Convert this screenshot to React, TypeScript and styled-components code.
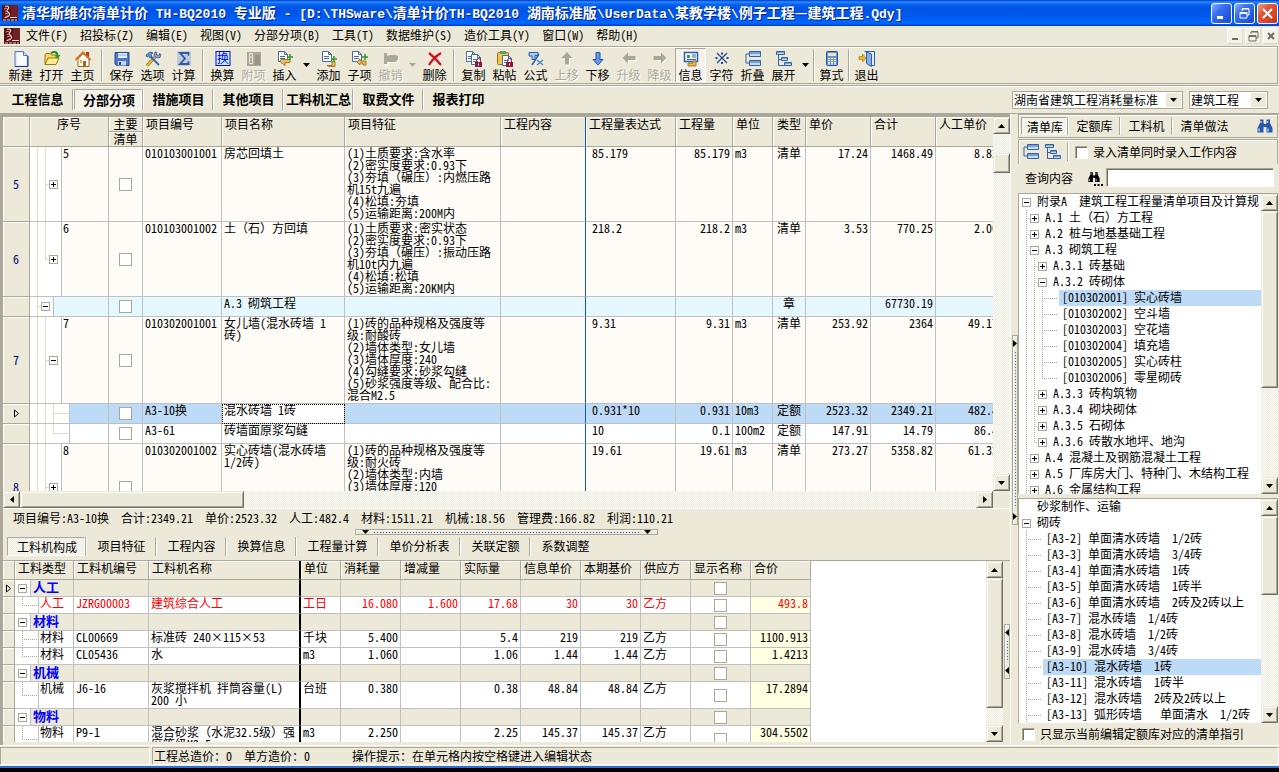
import React from "react";
import styled, { createGlobalStyle, css } from "styled-components";

const C = {
  face: "#ece9d8",
  edge: "#aca899",
  dark: "#716f64",
  line: "#c0c0c0",
  cream: "#fffcf7",
  section: "#e6f8ff",
  select: "#bddbf7",
  navy: "#000080",
  blue: "#0000ff",
  red: "#ff0000",
  yellow: "#ffffe1",
  frozen: "#1058c8",
};

const checker = `repeating-conic-gradient(${C.face} 0 25%, #fff 0 50%) 0 0 / 2px 2px`;

const Global = createGlobalStyle`
  * { box-sizing: border-box; }
  body { margin: 0; background: ${C.face}; }
  body, button, input, select, table {
    font-family: "Noto Sans CJK SC", "Liberation Sans", sans-serif;
    font-size: 12px;
    line-height: 12px;
    font-feature-settings: "hwid";
    color: #000;
  }
  button, input, select { margin: 0; padding: 0; border: 0; background: none; border-radius: 0; }
  svg { display: block; overflow: visible; }
`;

/* ---------- shared parts ---------- */

const Shell = styled.div`
  display: flex;
  flex-direction: column;
  height: 100vh;
  min-height: 600px;
  overflow: hidden;
  background: ${C.face};
`;

/* Full-width brackets keep their whole em; everything else in Latin is half an em. */
const FullWidth = styled.span`
  font-feature-settings: "hwid" 0;
`;
function wide(text?: string): React.ReactNode {
  return text?.split(/([（）])/).map((s, i) => (i % 2 ? <FullWidth key={i}>{s}</FullWidth> : s));
}

const Check = styled.input.attrs({ type: "checkbox" })<{ $sunken?: boolean }>`
  appearance: none;
  display: block;
  flex: none;
  width: 13px;
  height: 13px;
  border: 1px solid ${C.edge};
  background: #fff;
  ${(p) => p.$sunken && css`border-color: ${C.edge} #fff #fff ${C.edge}; box-shadow: inset 1px 1px ${C.dark};`}
`;

type Dir = "up" | "down" | "left" | "right";
const arrowPath: Record<Dir, string> = {
  up: "M0 4h7L3.5 0z",
  down: "M0 0h7L3.5 4z",
  left: "M4 0v7L0 3.5z",
  right: "M0 0v7l4-3.5z",
};
function Arrow({ dir, color = "#000" }: { dir: Dir; color?: string }) {
  const flat = dir === "up" || dir === "down";
  return (
    <svg width={flat ? 7 : 4} height={flat ? 4 : 7} aria-hidden="true">
      <path d={arrowPath[dir]} fill={color} />
    </svg>
  );
}

const Bar = styled.div<{ $h?: boolean }>`
  display: flex;
  flex: none;
  flex-direction: ${(p) => (p.$h ? "row" : "column")};
  ${(p) => (p.$h ? "height: 17px;" : "width: 17px;")}
  background: ${checker};
`;
const raised = css`
  background: ${C.face};
  border: 1px solid;
  border-color: ${C.face} ${C.dark} ${C.dark} ${C.face};
  box-shadow: inset 1px 1px #fff, inset -1px -1px ${C.edge};
`;
const BarButton = styled.button`
  ${raised}
  display: grid;
  place-items: center;
  flex: none;
  width: 17px;
  height: 17px;
`;
const Thumb = styled.div<{ $size: number; $h?: boolean }>`
  ${raised}
  flex: 0 1 ${(p) => p.$size}px;
  ${(p) => (p.$h ? "height: 17px;" : "width: 17px;")}
`;
const Space = styled.div<{ $size?: number }>`
  flex: ${(p) => (p.$size === undefined ? "1 1 0" : `0 0 ${p.$size}px`)};
`;
function ScrollBar({ thumb, before = 0, h }: { thumb: number; before?: number; h?: boolean }) {
  return (
    <Bar $h={h}>
      <BarButton aria-label={h ? "向左滚动" : "向上滚动"}><Arrow dir={h ? "left" : "up"} /></BarButton>
      <Space $size={before} />
      <Thumb $size={thumb} $h={h} />
      <Space />
      <BarButton aria-label={h ? "向右滚动" : "向下滚动"}><Arrow dir={h ? "right" : "down"} /></BarButton>
    </Bar>
  );
}

const Grip = styled.div<{ $h?: boolean; $len: number }>`
  display: flex;
  flex: none;
  align-items: center;
  justify-content: space-between;
  overflow: hidden;
  border: 1px solid ${C.edge};
  box-shadow: inset 1px 1px #fff;
  flex-direction: ${(p) => (p.$h ? "row" : "column")};
  ${(p) => (p.$h ? `width: ${p.$len}px; height: 6px; padding: 0 6px;` : `width: 6px; height: ${p.$len}px; padding: 4px 0;`)}
`;
const Dots = styled.div<{ $h?: boolean }>`
  flex: 1;
  margin: ${(p) => (p.$h ? "0 5px" : "5px 0")};
  ${(p) =>
    p.$h
      ? "height: 1px; background: repeating-linear-gradient(90deg, #316ac5 0 1px, transparent 1px 3px);"
      : "width: 1px; background: repeating-linear-gradient(#316ac5 0 1px, transparent 1px 3px);"}
`;
function Splitter({ dir, len }: { dir: Dir; len: number }) {
  const h = dir === "down";
  return (
    <Grip $h={h} $len={len}>
      <Arrow dir={dir} />
      <Dots $h={h} />
      <Arrow dir={dir} />
    </Grip>
  );
}

const Tabs = styled.nav`
  display: flex;
  align-items: stretch;
  flex: none;
`;
const Tab = styled.button<{ $on?: boolean; $bold?: boolean; $w: number }>`
  flex: none;
  width: ${(p) => p.$w}px;
  white-space: nowrap;
  padding: ${(p) => (p.$on ? "1px 2px 0 4px" : "0 0 1px 1px")};
  ${(p) => p.$bold && "font-size: 13px; font-weight: 700;"}
  border: 1px solid transparent;
  ${(p) =>
    p.$on
      ? css`
          border-color: ${C.edge} #fff #fff ${C.edge};
          background: ${checker};
        `
      : ""}
`;
const TabRule = styled.i`
  flex: none;
  width: 2px;
  border-left: 1px solid ${C.edge};
  border-right: 1px solid #fff;
`;

/* ---------- title bar ---------- */

const Title = styled.header`
  display: flex;
  align-items: center;
  flex: none;
  height: 26px;
  padding: 0 1px 0 2px;
  background: linear-gradient(#0038c8 0, #2a8cff 2px, #0a66f0 4px, #0054e3 8px, #0058ee 16px, #0068ff 22px, #0060f8 24px, #0034b8 26px);
`;
const TitleText = styled.h1`
  flex: 1;
  min-width: 0;
  margin: 0 0 0 4px;
  white-space: pre;
  font-size: 14px;
  line-height: 18px;
  font-weight: 700;
  color: #fff;
  text-shadow: 1px 1px #00248c;
`;
const Mono = styled.span`
  font-family: "Liberation Mono", monospace;
  font-size: 13px;
`;
const WinButton = styled.button<{ $close?: boolean }>`
  display: grid;
  place-items: center;
  width: 21px;
  height: 21px;
  margin-left: 2px;
  border: 1px solid #fff;
  border-radius: 3px;
  background: ${(p) =>
    p.$close
      ? "linear-gradient(135deg, #f0a088, #e0583a 35%, #d04020 80%, #b83010)"
      : "linear-gradient(135deg, #8cb0f8, #3a70f0 35%, #2058e0 75%, #1a48c8)"};
`;

function Logo() {
  return (
    <svg width="16" height="16" viewBox="0 0 16 16" aria-hidden="true">
      <rect width="16" height="16" fill="#5a1418" />
      <path d="M9 0h7v12H9z" fill="#6e2024" />
      <path d="M3 1.500c3.500-1.500 4.500 1 3 2.500s-1 2.500.5 3.500 1.500 3-.5 4-3 .500-3 1.500" fill="none" stroke="#f0d0c8" strokeWidth="1.200" />
      <path d="M2 4l3-1M3 6.500l3-1M3 9l3-1M5 11l3-1" stroke="#c89088" />
      <path d="M8 12.500h7M1 15h3m1 0h3m1 0h3m1 0h2" stroke="#f0dcd8" />
    </svg>
  );
}
const restoreShape = (c: string) => (
  <svg width="11" height="11" viewBox="0 0 11 11" aria-hidden="true">
    <path d="M3 3V1h7v6H8M3 .500h7M1 4.500h7V10H1zM1 5.500h7" fill="none" stroke={c} />
  </svg>
);

const TITLE = "清华斯维尔清单计价 TH-BQ2010 专业版 - [D:\\THSware\\清单计价TH-BQ2010 湖南标准版\\UserData\\某教学楼\\例子工程—建筑工程.Qdy]";

function TitleBar() {
  return (
    <Title>
      <Logo />
      <TitleText>
        {TITLE.split(/([\x20-\x7e]+)/).map((s, i) => (i % 2 ? <Mono key={i}>{s}</Mono> : s))}
      </TitleText>
      <WinButton aria-label="最小化">
        <svg width="11" height="11"><path d="M1 8h6v3H1z" fill="#fff" /></svg>
      </WinButton>
      <WinButton aria-label="还原">{restoreShape("#fff")}</WinButton>
      <WinButton aria-label="关闭" $close>
        <svg width="13" height="13"><path d="M2 2l9 9M11 2l-9 9" stroke="#fff" strokeWidth="2" /></svg>
      </WinButton>
    </Title>
  );
}

/* ---------- menu ---------- */

const Menu = styled.nav`
  display: flex;
  align-items: center;
  flex: none;
  height: 20px;
  padding-left: 4px;
`;
const MenuItem = styled.button`
  flex: none;
  height: 18px;
  padding: 0 6px 2px;
  white-space: nowrap;
`;
const MdiButton = styled.button`
  display: grid;
  place-items: center;
  width: 16px;
  height: 16px;
  margin-left: 2px;
  background: #f4f2e8;
  border: 1px solid;
  border-color: #fff #e0dccc #d8d4c4 #fff;
`;
const MENUS = ["文件(F)", "招投标(Z)", "编辑(E)", "视图(V)", "分部分项(B)", "工具(T)", "数据维护(S)", "造价工具(Y)", "窗口(W)", "帮助(H)"];

function MenuBar() {
  return (
    <Menu>
      <Logo />
      {MENUS.map((m) => <MenuItem key={m}>{m}</MenuItem>)}
      <Space />
      <MdiButton aria-label="最小化子窗口"><svg width="10" height="10"><path d="M2 7h6v2H2z" fill={C.dark} /></svg></MdiButton>
      <MdiButton aria-label="还原子窗口">{restoreShape(C.dark)}</MdiButton>
      <MdiButton aria-label="关闭子窗口"><svg width="10" height="10"><path d="M2 2l6 6M8 2L2 8" stroke={C.dark} strokeWidth="2" /></svg></MdiButton>
    </Menu>
  );
}

/* ---------- toolbar ---------- */

const Strip = styled.div`
  display: flex;
  align-items: stretch;
  flex: none;
  height: 38px;
  margin-right: 1px;
  padding: 1px 0 1px 5px;
  border: 1px solid ${C.edge};
  border-left: 0;
  box-shadow: inset 0 1px #fff;
`;
const Tool = styled.button<{ $off?: boolean; $on?: boolean }>`
  display: flex;
  flex-direction: column;
  align-items: center;
  flex: none;
  width: 31px;
  padding: 2px 0 0;
  white-space: nowrap;
  border: 1px solid transparent;
  gap: 2px;
  ${(p) => p.$off && `color: ${C.edge}; text-shadow: 1px 1px #fff;`}
  ${(p) => p.$on && css`border-color: ${C.edge} #fff #fff ${C.edge}; background: #f4f2ea;`}
`;
const ToolRule = styled.i<{ $w?: number }>`
  flex: none;
  width: 2px;
  margin: 1px ${(p) => ((p.$w ?? 8) - 2) / 2}px;
  border-left: 1px solid ${C.edge};
  border-right: 1px solid #fff;
`;
const ToolMore = styled.button`
  display: grid;
  place-items: center;
  flex: none;
  width: 13px;
`;

const Page = ({ x = 0, y = 0 }: { x?: number; y?: number }) => (
  <g transform={`translate(${x} ${y})`}>
    <path d="M.500.500h6l3 3v7h-9z" fill="#fff" stroke="#4a6aa8" />
    <path d="M6.500.500v3h3M2 5.500h5M2 7.500h5" fill="none" stroke="#4a6aa8" />
  </g>
);
const Plus = ({ x, y }: { x: number; y: number }) => <path d={`M${x - 3} ${y}h6M${x} ${y - 3}v6`} stroke="#2a9a2a" strokeWidth="1.500" />;
const Lock = () => (
  <g>
    <path d="M10.500 11V9.500a2 2 0 014 0V11" fill="none" stroke="#902040" />
    <rect x="9" y="11" width="7" height="5" fill="#901838" />
    <rect x="12" y="12.500" width="1" height="2" fill="#fff" />
  </g>
);

const GLYPHS: Record<string, React.ReactNode> = {
  新建: (<><path d="M2 .500h8.500l4 4v11H2z" fill="#dce9ff" stroke="#5078c0" /><path d="M4 2h6v3h3v9H4z" fill="#f8fbff" /><path d="M10.500.500v4h4" fill="#c8dcff" stroke="#5078c0" /><path d="M2 15.500h13V5" fill="none" stroke="#203880" /></>),
  打开: (<><path d="M1 13.500V4l1-1.500h4L7.500 4H12v3" fill="#f8d860" stroke="#a07810" /><path d="M1 13.500L4 7h11l-3 6.500z" fill="#ffec98" stroke="#a07810" /><path d="M7 2.500C9 0 13 .500 13.500 4" fill="none" stroke="#208820" strokeWidth="2" /><path d="M10.500 4h6l-3 4z" fill="#28a028" /></>),
  主页: (<><path d="M11 1h3v6h-3z" fill="#c03030" /><path d="M3 8v7.500h11V8L8 2.500z" fill="#fff" stroke="#a06820" /><path d="M.500 9L8 1.500 15.500 9" fill="none" stroke="#d07818" strokeWidth="2" /><path d="M8 10h3v5H8z" fill="#b06818" /><path d="M5 9h2v3H5z" fill="#e8b048" /></>),
  保存: (<><path d="M1 1.500h14v13H2.500L1 13z" fill="#4878d0" stroke="#284888" /><path d="M4 2h9v5H4z" fill="#e8f0ff" /><path d="M4 4h9" stroke="#88a8e0" /><path d="M4 10h8v4.500H4z" fill="#c8d4e8" /><path d="M5 11h2v3H5z" fill="#284888" /></>),
  选项: (<><path d="M2 14.500L11 5" stroke="#906810" strokeWidth="3" /><path d="M2 14.500L11 5" stroke="#f8c830" strokeWidth="1.600" /><path d="M10 1l1.500 0v3h3V2.500l1.500 1-1 3-3 .500-3-2.500z" fill="#88a8e0" stroke="#284880" strokeWidth=".7" /><path d="M5 5l9 9" stroke="#3868b8" strokeWidth="2" /><path d="M1 4l4-3 3 1-2 1.500 1 2-2 1.500-1.500-2L2 6z" fill="#6090d8" stroke="#284880" strokeWidth=".7" /></>),
  计算: (<><rect x="1" y="0" width="14" height="15" fill="#c0ccd8" /><path d="M12.500 4.500V2H4l5 5.500L4 13h8.500v-2.500" fill="none" stroke="#3058a8" strokeWidth="1.800" /></>),
  换算: (<><rect x="1" y=".5" width="14" height="14" fill="#c8f0ff" stroke="#0000ff" /><text x="2" y="12" fontSize="12" fill="#0000ff">换</text></>),
  附项: (<><rect x="1" y="1" width="14" height="14" fill={C.edge} /><path d="M3.500 2.500h3v10h-3zM3.500 6h3" fill="none" stroke="#ece9d8" /><path d="M9 4h5v10H9z" fill="#989488" /></>),
  插入: (<><Page x={1} /><path d="M4 8.500h9v3H8v3l-5-4z" fill="#f0c050" stroke="#986018" strokeWidth=".8" /><Plus x={13} y={6} /></>),
  添加: (<><Page x={1} /><path d="M6 14.500h5v-4h3v5H8z" fill="#f0c050" stroke="#986018" strokeWidth=".8" /><Plus x={13} y={8} /></>),
  子项: (<><Page /><path d="M5 11l3-3v2h6v4h-3v-2H8v2z" fill="#f0c050" stroke="#986018" strokeWidth=".8" /><Plus x={13} y={6} /></>),
  撤销: (<><path d="M2 5v9h3v-3h10V6" fill="none" stroke="#fff" /><path d="M1 2v11h3v-2h9l2-3V5l-3-1H7L4 5V2z" fill={C.edge} /></>),
  删除: <path d="M2 2c4 3 8 7 12 12M14 2C9 5 5 9 2 14" fill="none" stroke="#d01020" strokeWidth="2.200" />,
  复制: (<><Page /><Page x={5} y={3} /><Lock /></>),
  粘帖: (<><rect x=".5" y="1.5" width="11" height="12" rx="1" fill="#f0c850" stroke="#907018" /><rect x="3" y="0" width="6" height="3" fill="#60a060" /><Page x={5} y={4} /><Lock /></>),
  公式: (<><path d="M1 1.500h9v3H7v4H4V5H1z" fill="#a8c8f0" stroke="#3060b0" /><path d="M11 3L4 14" stroke="#3060b0" strokeWidth="1.500" /><path d="M9 9l6 5M15 9l-6 5" stroke="#4080c8" strokeWidth="1.200" /></>),
  上移: (<><path d="M9 2l6 6h-4v7H7" fill="#fff" /><path d="M8 1l5.500 6H10v6.500H6V7H2.500z" fill={C.edge} /></>),
  下移: <path d="M8 14l5-5.500h-3V1.500H6v7H3z" fill="#6898e8" stroke="#2850b0" />,
  升级: (<><path d="M3 8l5 5.500V10h7.500V6" fill="#fff" /><path d="M1.500 7L7 1.500V5h7.500v4H7v3.500z" fill={C.edge} /></>),
  降级: (<><path d="M2.500 10H10v3.500L15.500 8" fill="#fff" /><path d="M14.500 7L9 1.500V5H1.500v4H9v3.500z" fill={C.edge} /></>),
  信息: (<><rect x="1.5" y="1.5" width="13" height="9" fill="#fff" stroke="#3060a8" strokeWidth="1.500" /><path d="M4 4h3v3H4z" fill="#40a040" /><path d="M9 4h4M9 6h4M4 8.500h9" stroke="#3060a8" /><path d="M5 15v-3h5v-2h3v5z" fill="#e8b848" stroke="#986018" strokeWidth=".8" /></>),
  字符: (<><path d="M3 2l10 10M13 2L3 12" stroke="#204890" strokeWidth="1.300" /><path d="M7 1.500h2v2H7zM7 11h2v2H7zM1.500 6h2v2h-2zM12.500 6h2v2h-2z" fill="#204890" /></>),
  折叠: (<><path d="M5 3H1v9h4" fill="none" stroke="#3060a8" /><path d="M4.500.500h11v5h-11zM4.500 9.500h11v5h-11z" fill="#c8dcf8" stroke="#3060a8" /><path d="M5 2h10M5 11h10" stroke="#3060a8" /></>),
  展开: (<><path d="M2.500 4v10.500H9M2.500 8.500H6" fill="none" stroke="#3060a8" /><path d="M.500.500h8v3h-8zM5.500 6.500h6v3h-6zM8.500 11.500h7v3h-7z" fill="#c8dcf8" stroke="#3060a8" /><path d="M1 1h8M6 7h5M9 12h6" stroke="#3060a8" /></>),
  算式: (<><rect x="2.500" y=".5" width="11" height="14" rx="1" fill="#6890d8" stroke="#2850a0" /><rect x="4" y="2" width="8" height="3" fill="#f8e8b0" /><path d="M4 7.500h8M4 9.500h8M4 11.500h8M4 13h8" stroke="#fff" strokeDasharray="2 1" /></>),
  退出: (<><path d="M5.500.500h10v14h-4" fill="#e0ecfc" stroke="#3060a8" /><path d="M7.500 1l5 2v12.500l-5-3z" fill="#88b0e8" stroke="#3060a8" /><path d="M7 7L3.500 3v2.500H0v3h3.500V11z" fill="#f0b820" stroke="#a07008" strokeWidth=".6" /></>),
};

const TOOLS = [
  "新建", "打开", "主页", "|", "保存", "选项", "计算", "|", "换算", "附项", "插入", "v", "添加", "子项", "撤销", "x", "删除", "|",
  "复制", "粘帖", "公式", "上移", "下移", "升级", "降级", "信息", "字符", "折叠", "展开", "v", "!", "算式", "!", "退出",
];
const OFF = new Set(["附项", "撤销", "上移", "升级", "降级"]);

function ToolBar() {
  return (
    <Strip>
      {TOOLS.map((t, i) => {
        if (t === "|") return <ToolRule key={i} />;
        if (t === "!") return <ToolRule key={i} $w={4} />;
        if (t === "v" || t === "x") return <ToolMore key={i} aria-label="更多"><Arrow dir="down" color={t === "v" ? "#000" : C.edge} /></ToolMore>;
        return (
          <Tool key={i} $off={OFF.has(t)} $on={t === "信息"}>
            <svg width="16" height="16" viewBox="0 0 16 16" aria-hidden="true">{GLYPHS[t]}</svg>
            {t}
          </Tool>
        );
      })}
    </Strip>
  );
}

/* ---------- page tabs ---------- */

const TabStrip = styled.div`
  display: flex;
  align-items: center;
  flex: none;
  height: 30px;
  padding: 2px 11px 1px 2px;
  box-shadow: inset 0 1px ${C.face}, inset 0 2px ${C.edge}, inset 0 3px #fff, inset 0 -1px ${C.edge};
`;
const MainTabs = styled(Tabs)`
  height: 21px;
`;
const Combo = styled.label<{ $w: number }>`
  display: flex;
  align-items: center;
  flex: none;
  width: ${(p) => p.$w}px;
  height: 18px;
  margin-left: 6px;
  border: 1px solid ${C.edge};
  background: #fff;
  select { appearance: none; flex: 1; min-width: 0; height: 16px; padding-left: 1px; }
`;
const ComboButton = styled.span`
  display: grid;
  place-items: center;
  width: 15px;
  height: 14px;
  margin-right: 1px;
  background: ${C.face};
`;

function PageTabs() {
  const names = ["工程信息", "分部分项", "措施项目", "其他项目", "工料机汇总", "取费文件", "报表打印"];
  return (
    <TabStrip>
      <MainTabs>
        {names.map((n, i) => (
          <React.Fragment key={n}>
            {i > 0 && <TabRule />}
            <Tab $bold $on={i === 1} $w={i === 0 ? 70 : 68}>{n}</Tab>
          </React.Fragment>
        ))}
      </MainTabs>
      <Space />
      <Combo $w={171}><select aria-label="定额标准"><option>湖南省建筑工程消耗量标准</option></select><ComboButton><Arrow dir="down" /></ComboButton></Combo>
      <Combo $w={79}><select aria-label="专业"><option>建筑工程</option></select><ComboButton><Arrow dir="down" /></ComboButton></Combo>
    </TabStrip>
  );
}

/* ---------- tree connectors ---------- */

type Guide = "none" | "line" | "tee" | "end";
/* Each column draws its own piece of the connector: vertical run and horizontal stub. */
const GuideCol = styled.i<{ $kind: Guide; $w: number; $dotted?: boolean }>`
  flex: none;
  align-self: stretch;
  width: ${(p) => p.$w}px;
  ${(p) => {
    if (p.$kind === "none") return "";
    const c = p.$dotted ? C.edge : "#e0dcc8";
    const v = p.$dotted ? `repeating-linear-gradient(${c} 0 1px, transparent 1px 2px)` : `linear-gradient(${c}, ${c})`;
    const hz = p.$dotted ? `repeating-linear-gradient(90deg, ${c} 0 1px, transparent 1px 2px)` : `linear-gradient(${c}, ${c})`;
    const vert = `${v} 4px 0 / 1px ${p.$kind === "end" ? "50%" : "100%"} no-repeat`;
    const horz = `${hz} 4px 50% / 100% 1px no-repeat`;
    return `background: ${p.$kind === "line" ? vert : `${vert}, ${horz}`};`;
  }}
`;
const Box = styled.button`
  display: grid;
  place-items: center;
  flex: none;
  width: 9px;
  height: 9px;
  border: 1px solid ${C.edge};
  background: #fff;
`;
function Expander({ open }: { open: boolean }) {
  return (
    <Box aria-label={open ? "折叠" : "展开"} aria-expanded={open}>
      <svg width="5" height="5" shapeRendering="crispEdges"><path d={open ? "M0 2h5v1H0z" : "M0 2h5v1H0zM2 0h1v5H2z"} /></svg>
    </Box>
  );
}

/* ---------- data grids ---------- */

const Viewport = styled.div`
  flex: 1;
  min-width: 0;
  min-height: 0;
  overflow: hidden;
`;
const Table = styled.table<{ $w: number }>`
  width: ${(p) => p.$w}px;
  table-layout: fixed;
  border-spacing: 0;
  border-collapse: separate;
`;
const Th = styled.th<{ $h: number; $split?: string; $center?: boolean; $flush?: boolean }>`
  height: ${(p) => p.$h}px;
  padding: ${(p) => (p.$flush ? "0" : "0 0 0 3px")};
  vertical-align: top;
  text-align: ${(p) => (p.$center ? "center" : "left")};
  font-weight: 400;
  white-space: nowrap;
  background: ${C.face};
  border-right: 1px solid ${C.edge};
  border-bottom: 1px solid ${C.edge};
  box-shadow: inset 1px 1px #fff;
  line-height: 14px;
  ${(p) => p.$split && `border-right: ${p.$split};`}
`;
const Half = styled.div`
  height: 14px;
  & + & { height: 15px; border-top: 1px solid ${C.edge}; box-shadow: inset 0 1px #fff; }
`;
const Td = styled.td<{ $align?: string; $bg?: string; $split?: string; $pad?: string; $focus?: boolean; $mid?: boolean }>`
  padding: ${(p) => p.$pad ?? "0 2px"};
  vertical-align: ${(p) => (p.$mid ? "middle" : "top")};
  text-align: ${(p) => p.$align ?? "left"};
  white-space: pre;
  border-right: 1px solid ${C.line};
  border-bottom: 1px solid ${C.line};
  ${(p) => p.$bg && `background: ${p.$bg};`}
  ${(p) => p.$split && `border-right: ${p.$split};`}
  ${(p) => p.$focus && "outline: 1px dotted #000; outline-offset: -1px;"}
`;
const Tr = styled.tr<{ $h: number; $bg: string; $color?: string }>`
  height: ${(p) => p.$h}px;
  background: ${(p) => p.$bg};
  color: ${(p) => p.$color ?? "#000"};
`;
const Marker = styled.td`
  padding: 0;
  vertical-align: middle;
  text-align: center;
  color: ${C.navy};
  background: ${C.face};
  border-right: 1px solid ${C.edge};
  border-bottom: 1px solid ${C.edge};
  box-shadow: inset 1px 1px #fff;
  svg { margin: 0 auto; }
`;
const MiddleCheck = styled(Check)`
  margin: 0 auto;
`;
const Serial = styled.div<{ $h: number }>`
  display: flex;
  align-items: stretch;
  height: ${(p) => p.$h}px;
`;
const Gutter = styled.div`
  display: flex;
  align-items: center;
  flex: none;
  background: #fff;
  border-right: 1px solid ${C.line};
`;
const SerialText = styled.div<{ $group?: boolean }>`
  padding-left: ${(p) => (p.$group ? 2 : 1)}px;
  ${(p) => p.$group && `font-size: 13px; font-weight: 700; color: ${C.blue}; line-height: 13px;`}
`;
function CurrentRow() {
  return (
    <svg width="5" height="9" aria-hidden="true"><path d="M.500 1v7l4-3.500z" fill="#fff" stroke="#000" /></svg>
  );
}

type Bill = {
  no?: string; kind: "bill" | "chapter" | "norm"; h: number; open?: boolean; last?: boolean; current?: boolean;
  code: string; name: string; feature?: string; vals: string[];
};
const BILLS: Bill[] = [
  { no: "5", kind: "bill", h: 75, code: "010103001001", name: "房芯回填土", feature: "(1)土质要求:含水率\n(2)密实度要求:0.93下\n(3)夯填（碾压）:内燃压路\n机15t九遍\n(4)松填:夯填\n(5)运输距离:200M内", vals: ["85.179", "85.179", "m3", "清单", "17.24", "1468.49", "8.82"] },
  { no: "6", kind: "bill", h: 75, last: true, code: "010103001002", name: "土（石）方回填", feature: "(1)土质要求:密实状态\n(2)密实度要求:0.93下\n(3)夯填（碾压）:振动压路\n机10t内九遍\n(4)松填:松填\n(5)运输距离:20KM内", vals: ["218.2", "218.2", "m3", "清单", "3.53", "770.25", "2.06"] },
  { kind: "chapter", h: 20, open: true, code: "", name: "A.3 砌筑工程", vals: ["", "", "", "章", "", "67730.19", ""] },
  { no: "7", kind: "bill", h: 87, open: true, code: "010302001001", name: "女儿墙(混水砖墙 1\n砖)", feature: "(1)砖的品种规格及强度等\n级:耐酸砖\n(2)墙体类型:女儿墙\n(3)墙体厚度:240\n(4)勾缝要求:砂浆勾缝\n(5)砂浆强度等级、配合比:\n混合M2.5", vals: ["9.31", "9.31", "m3", "清单", "253.92", "2364", "49.17"] },
  { kind: "norm", h: 20, current: true, code: "A3-10换", name: "混水砖墙 1砖", vals: ["0.931*10", "0.931", "10m3", "定额", "2523.32", "2349.21", "482.4"] },
  { kind: "norm", h: 20, last: true, code: "A3-61", name: "砖墙面原浆勾缝", vals: ["10", "0.1", "100m2", "定额", "147.91", "14.79", "86.4"] },
  { no: "8", kind: "bill", h: 87, code: "010302001002", name: "实心砖墙(混水砖墙\n1/2砖)", feature: "(1)砖的品种规格及强度等\n级:耐火砖\n(2)墙体类型:内墙\n(3)墙体厚度:120", vals: ["19.61", "19.61", "m3", "清单", "273.27", "5358.82", "61.32"] },
];
const BILL_COLS = [27, 79, 34, 79, 123, 156, 85, 90, 57, 40, 33, 65, 65, 65];
const BILL_HEADS = ["项目编号", "项目名称", "项目特征", "工程内容", "工程量表达式", "工程量", "单位", "类型", "单价", "合计", "人工单价"];
const VAL_ALIGN = ["left", "right", "left", "center", "right", "right", "right"];
const FROZEN = `1px solid ${C.frozen}`;

function BillGrid() {
  return (
    <Table $w={BILL_COLS.reduce((a, b) => a + b)}>
      <colgroup>{BILL_COLS.map((w, i) => <col key={i} width={w} />)}</colgroup>
      <thead>
        <tr>
          <Th $h={30} aria-label="行标" />
          <Th $h={30} $center $flush>序号</Th>
          <Th $h={30} $center $flush><Half>主要</Half><Half>清单</Half></Th>
          {BILL_HEADS.map((h) => (
            <Th key={h} $h={30} $center={h === "类型"} $split={h === "工程内容" ? FROZEN : undefined} $flush={h === "类型"}>{h}</Th>
          ))}
        </tr>
      </thead>
      <tbody>
        {BILLS.map((r, i) => {
          const bg = r.kind === "chapter" ? C.section : r.kind === "bill" ? C.cream : r.current ? C.select : "#fff";
          return (
            <Tr key={i} $h={r.h} $bg={bg}>
              <Marker>{r.current ? <CurrentRow /> : r.no}</Marker>
              <Td $pad="0">
                <Serial $h={r.h - 1}>
                  <Gutter>
                    <GuideCol $kind="none" $w={3} />
                    {r.kind === "chapter" ? (
                      <><GuideCol $kind="tee" $w={8} /><Expander open /><GuideCol $kind="none" $w={3} /></>
                    ) : r.kind === "bill" ? (
                      <><GuideCol $kind="line" $w={8} /><GuideCol $kind={r.last ? "end" : "tee"} $w={8} /><Expander open={!!r.open} /><GuideCol $kind="none" $w={3} /></>
                    ) : (
                      <><GuideCol $kind="line" $w={8} /><GuideCol $kind="line" $w={8} /><GuideCol $kind={r.last ? "end" : "tee"} $w={20} /></>
                    )}
                  </Gutter>
                  <SerialText>{r.kind === "bill" ? r.no : ""}</SerialText>
                </Serial>
              </Td>
              <Td $pad="0" $mid><MiddleCheck aria-label={`主要清单 ${r.code || r.name}`} /></Td>
              <Td>{r.code}</Td>
              <Td $bg={r.current ? "#fff" : undefined} $focus={r.current}>{wide(r.name)}</Td>
              <Td>{wide(r.feature)}</Td>
              <Td $split={FROZEN} />
              {r.vals.map((v, k) => (
                <Td key={k} $align={VAL_ALIGN[k]} $pad={k === 0 ? "0 2px 0 6px" : undefined}>{v}</Td>
              ))}
            </Tr>
          );
        })}
      </tbody>
    </Table>
  );
}

type Res = { group?: boolean; type: string; h?: number; last?: boolean; red?: boolean; vals?: string[] };
const RES: Res[] = [
  { group: true, type: "人工" },
  { type: "人工", last: true, red: true, vals: ["JZRG00003", "建筑综合人工", "工日", "16.080", "1.600", "17.68", "30", "30", "乙方", "", "493.8"] },
  { group: true, type: "材料" },
  { type: "材料", vals: ["CL00669", "标准砖 240×115×53", "千块", "5.400", "", "5.4", "219", "219", "乙方", "", "1100.913"] },
  { type: "材料", last: true, vals: ["CL05436", "水", "m3", "1.060", "", "1.06", "1.44", "1.44", "乙方", "", "1.4213"] },
  { group: true, type: "机械" },
  { type: "机械", h: 27, last: true, vals: ["J6-16", "灰浆搅拌机 拌筒容量(L)\n200 小", "台班", "0.380", "", "0.38", "48.84", "48.84", "乙方", "", "17.2894"] },
  { group: true, type: "物料" },
  { type: "物料", h: 27, last: true, vals: ["P9-1", "混合砂浆（水泥32.5级）强\n度等级M2.5", "m3", "2.250", "", "2.25", "145.37", "145.37", "乙方", "", "304.5502"] },
];
const RES_COLS = [12, 59, 75, 152, 40, 60, 60, 60, 60, 60, 50, 60, 60];
const RES_HEADS = ["工料类型", "工料机编号", "工料机名称", "单位", "消耗量", "增减量", "实际量", "信息单价", "本期基价", "供应方", "显示名称", "合价"];
const RES_RIGHT = new Set([3, 4, 5, 6, 7, 10]);
const THICK = "2px solid #000";

function ResourceGrid() {
  return (
    <Table $w={RES_COLS.reduce((a, b) => a + b)}>
      <colgroup>{RES_COLS.map((w, i) => <col key={i} width={w} />)}</colgroup>
      <thead>
        <tr>
          <Th $h={19} aria-label="行标" />
          {RES_HEADS.map((h) => <Th key={h} $h={19} $split={h === "工料机名称" ? THICK : undefined}>{h}</Th>)}
        </tr>
      </thead>
      <tbody>
        {RES.map((r, i) => {
          const h = r.h ?? 17;
          const vals = r.vals ?? Array(11).fill("");
          return (
            <Tr key={i} $h={h} $bg={r.group ? C.face : "#fff"} $color={r.red ? C.red : undefined}>
              <Marker>{i === 0 && <CurrentRow />}</Marker>
              <Td $pad="0">
                <Serial $h={h - 1}>
                  <Gutter>
                    <GuideCol $kind="none" $w={3} />
                    {r.group ? <><Expander open /><GuideCol $kind="none" $w={3} /></> : <GuideCol $kind={r.last ? "end" : "tee"} $w={20} $dotted />}
                  </Gutter>
                  <SerialText $group={r.group}>{r.type}</SerialText>
                </Serial>
              </Td>
              {vals.map((v: string, k: number) =>
                k === 9 ? (
                  <Td key={k} $pad="0" $mid><MiddleCheck aria-label={`显示名称 ${r.type} ${i}`} /></Td>
                ) : (
                  <Td key={k} $align={RES_RIGHT.has(k) ? "right" : "left"} $bg={k === 10 && !r.group ? C.yellow : undefined} $split={k === 1 ? THICK : undefined}>{wide(v)}</Td>
                )
              )}
            </Tr>
          );
        })}
      </tbody>
    </Table>
  );
}

/* ---------- left side ---------- */

const Workspace = styled.main`
  display: flex;
  flex: 1;
  min-height: 0;
`;
const Left = styled.section`
  display: flex;
  flex-direction: column;
  flex: 1;
  min-width: 0;
  border-left: 3px solid ${C.edge};
  border-top: 3px solid ${C.edge};
`;
const Row = styled.div<{ $grow?: boolean; $h?: number }>`
  display: flex;
  min-height: 0;
  ${(p) => (p.$grow ? "flex: 1;" : "flex: none;")}
  ${(p) => p.$h && `height: ${p.$h}px;`}
`;
const Fill = styled.div`
  flex: 1;
  min-width: 0;
`;
const Corner = styled.div`
  width: 17px;
  height: 17px;
`;
const Info = styled.div`
  display: flex;
  align-items: center;
  flex: none;
  gap: 12px;
  height: 21px;
  padding: 0 0 2px 10px;
  white-space: nowrap;
  border-top: 1px solid #fff;
`;
const SplitRow = styled.div`
  display: flex;
  justify-content: center;
  flex: none;
  height: 6px;
`;
const SubTabs = styled(Tabs)`
  height: 26px;
  padding: 2px 0 4px 4px;
  border-bottom: 1px solid ${C.edge};
`;
const LowerRow = styled(Row)`
  margin-bottom: 3px;
`;
const LowerBody = styled(Viewport)`
  background: #fff;
`;
const SideGrip = styled.div`
  display: flex;
  align-items: center;
  flex: none;
  width: 7px;
  padding-left: 1px;
`;
const Divider = styled.div`
  display: flex;
  align-items: center;
  justify-content: flex-end;
  flex: none;
  width: 8px;
  border-left: 1px solid #fff;
`;

function LeftSide() {
  const info = ["项目编号:A3-10换", "合计:2349.21", "单价:2523.32", "人工:482.4", "材料:1511.21", "机械:18.56", "管理费:166.82", "利润:110.21"];
  const tabs: [string, number][] = [["工料机构成", 78], ["项目特征", 68], ["工程内容", 68], ["换算信息", 68], ["工程量计算", 80], ["单价分析表", 80], ["关联定额", 68], ["系数调整", 68]];
  return (
    <Left>
      <Row $grow>
        <Viewport><BillGrid /></Viewport>
        <ScrollBar before={19} thumb={20} />
      </Row>
      <Row>
        <Fill><ScrollBar h thumb={224} /></Fill>
        <Corner />
      </Row>
      <Info>{info.map((t) => <span key={t}>{t}</span>)}</Info>
      <SplitRow><Splitter dir="down" len={303} /></SplitRow>
      <SubTabs>
        {tabs.map(([n, w], i) => (
          <React.Fragment key={n}>
            {i > 0 && <TabRule />}
            <Tab $on={i === 0} $w={w}>{n}</Tab>
          </React.Fragment>
        ))}
      </SubTabs>
      <LowerRow $h={181}>
        <LowerBody><ResourceGrid /></LowerBody>
        <ScrollBar thumb={130} />
        <SideGrip><Splitter dir="left" len={55} /></SideGrip>
      </LowerRow>
    </Left>
  );
}

/* ---------- right side ---------- */

const Right = styled.aside`
  display: flex;
  flex-direction: column;
  flex: none;
  width: 261px;
  padding: 0 1px 0 0;
`;
const LibTabs = styled.div`
  display: flex;
  align-items: center;
  flex: none;
  height: 24px;
  padding: 0 4px 0 2px;
  border: 1px solid ${C.edge};
  box-shadow: inset 1px 1px #fff;
`;
const LibTabRow = styled(Tabs)`
  height: 18px;
`;
const LibOptions = styled.div`
  display: flex;
  align-items: center;
  flex: none;
  height: 25px;
  margin-top: 1px;
  padding-left: 4px;
  gap: 6px;
  border: 1px solid ${C.edge};
  border-bottom: 0;
  box-shadow: inset 1px 1px #fff;
`;
const OptionRule = styled(TabRule)`
  height: 18px;
`;
const CheckLabel = styled.label`
  display: flex;
  align-items: center;
  gap: 5px;
  white-space: nowrap;
`;
const SearchRow = styled.div`
  display: flex;
  align-items: center;
  flex: none;
  height: 29px;
  padding: 0 4px 2px 7px;
  label { flex: none; width: 62px; }
`;
const SearchInput = styled.input`
  flex: 1;
  min-width: 0;
  height: 19px;
  margin-left: 3px;
  background: #fff;
  border: 1px solid;
  border-color: ${C.edge} #fff #fff ${C.edge};
  box-shadow: inset 1px 1px ${C.dark};
`;
const TreeBox = styled.div<{ $h?: number }>`
  display: flex;
  ${(p) => (p.$h ? `flex: none; height: ${p.$h}px;` : "flex: 1; min-height: 0;")}
  background: #fff;
  border-left: 1px solid ${C.edge};
  border-top: 1px solid ${C.edge};
`;
const TreeList = styled.ul`
  flex: 1;
  min-width: 0;
  margin: 0;
  padding: 0 0 0 3px;
  overflow: hidden;
  list-style: none;
`;
const TreeRow = styled.li`
  display: flex;
  align-items: center;
  height: 16px;
`;
const TreeText = styled.span<{ $on?: boolean; $leaf?: boolean }>`
  flex: 1;
  height: 16px;
  padding-left: 3px;
  margin-left: ${(p) => (p.$leaf ? 1 : 3)}px;
  line-height: 13px;
  white-space: pre;
  ${(p) => p.$on && `background: ${C.select};`}
`;
const Footer = styled.div`
  display: flex;
  align-items: center;
  flex: none;
  height: 22px;
  padding-left: 4px;
`;

type Node = { text: string; guides: Guide[]; open?: boolean; leaf?: boolean; bare?: boolean; on?: boolean };
const leaf3 = (text: string, last = false, on = false): Node => ({ text, guides: ["line", "line", last ? "end" : "tee"], leaf: true, on });
const BILL_TREE: Node[] = [
  { text: "附录A  建筑工程工程量清单项目及计算规", guides: [], open: true },
  { text: "A.1 土（石）方工程", guides: ["tee"] },
  { text: "A.2 桩与地基基础工程", guides: ["tee"] },
  { text: "A.3 砌筑工程", guides: ["tee"], open: true },
  { text: "A.3.1 砖基础", guides: ["line", "tee"] },
  { text: "A.3.2 砖砌体", guides: ["line", "tee"], open: true },
  leaf3("[010302001] 实心砖墙", false, true),
  leaf3("[010302002] 空斗墙"),
  leaf3("[010302003] 空花墙"),
  leaf3("[010302004] 填充墙"),
  leaf3("[010302005] 实心砖柱"),
  leaf3("[010302006] 零星砌砖", true),
  { text: "A.3.3 砖构筑物", guides: ["line", "tee"] },
  { text: "A.3.4 砌块砌体", guides: ["line", "tee"] },
  { text: "A.3.5 石砌体", guides: ["line", "tee"] },
  { text: "A.3.6 砖散水地坪、地沟", guides: ["line", "end"] },
  { text: "A.4 混凝土及钢筋混凝土工程", guides: ["tee"] },
  { text: "A.5 厂库房大门、特种门、木结构工程", guides: ["tee"] },
  { text: "A.6 金属结构工程", guides: ["tee"] },
];
const NORM_TREE: Node[] = [
  { text: "砂浆制作、运输", guides: [], bare: true },
  { text: "砌砖", guides: [], open: true },
  ...[
    "[A3-2] 单面清水砖墙  1/2砖", "[A3-3] 单面清水砖墙  3/4砖", "[A3-4] 单面清水砖墙  1砖", "[A3-5] 单面清水砖墙  1砖半",
    "[A3-6] 单面清水砖墙  2砖及2砖以上", "[A3-7] 混水砖墙  1/4砖", "[A3-8] 混水砖墙  1/2砖", "[A3-9] 混水砖墙  3/4砖",
    "[A3-10] 混水砖墙  1砖", "[A3-11] 混水砖墙  1砖半", "[A3-12] 混水砖墙  2砖及2砖以上", "[A3-13] 弧形砖墙   单面清水  1/2砖",
  ].map((text): Node => ({ text, guides: ["tee"], leaf: true, on: text.startsWith("[A3-10]") })),
];

function Tree({ nodes }: { nodes: Node[] }) {
  return (
    <TreeList>
      {nodes.map((n) => (
        <TreeRow key={n.text}>
          {n.guides.map((g, i) => (
            <GuideCol key={i} $dotted $kind={g} $w={n.leaf && i === n.guides.length - 1 ? 20 : 8} />
          ))}
          {n.bare ? <GuideCol $kind="none" $w={9} /> : !n.leaf && <Expander open={!!n.open} />}
          <TreeText $leaf={n.leaf} $on={n.on}>{wide(n.text)}</TreeText>
        </TreeRow>
      ))}
    </TreeList>
  );
}

function Binoculars({ color, dots }: { color: string; dots?: boolean }) {
  return (
    <svg width="16" height="16" viewBox="0 0 16 16" aria-hidden="true">
      <g transform={dots ? "translate(1 1) scale(.75)" : undefined}>
        <path d="M3 1.500h3.500V5L7 6h2l.500-1V1.500H13V5l2.500 5v4.500h-6V9h-3v5.500h-6V10L3 5z" fill={color} />
        <path d="M2 10.500v3M11 10.500v3M4 3v2M10.500 3v2" stroke={dots ? "#999" : "#a8c8f8"} strokeWidth="1.500" />
      </g>
      {dots && <path d="M7 14h2v2H7zM10.500 14h2v2h-2zM14 14h2v2h-2z" />}
    </svg>
  );
}

function RightSide() {
  const tabs: [string, number][] = [["清单库", 46], ["定额库", 50], ["工料机", 50], ["清单做法", 62]];
  return (
    <Right>
      <LibTabs>
        <LibTabRow>
          {tabs.map(([n, w], i) => (
            <React.Fragment key={n}>
              {i > 0 && <TabRule />}
              <Tab $on={i === 0} $w={w}>{n}</Tab>
            </React.Fragment>
          ))}
        </LibTabRow>
        <Space />
        <Binoculars color="#2858a8" />
      </LibTabs>
      <LibOptions>
        <svg width="16" height="16" viewBox="0 0 16 16" aria-hidden="true">{GLYPHS["折叠"]}</svg>
        <svg width="16" height="16" viewBox="0 0 16 16" aria-hidden="true">{GLYPHS["展开"]}</svg>
        <OptionRule />
        <CheckLabel><Check $sunken />录入清单同时录入工作内容</CheckLabel>
      </LibOptions>
      <SearchRow>
        <label htmlFor="query">查询内容</label>
        <Binoculars color="#000" dots />
        <SearchInput id="query" />
      </SearchRow>
      <TreeBox>
        <Tree nodes={BILL_TREE} />
        <ScrollBar thumb={177} />
      </TreeBox>
      <Space $size={4} />
      <TreeBox $h={225}>
        <Tree nodes={NORM_TREE} />
        <ScrollBar thumb={79} />
      </TreeBox>
      <Footer><CheckLabel><Check $sunken />只显示当前编辑定额库对应的清单指引</CheckLabel></Footer>
    </Right>
  );
}

/* ---------- status bar ---------- */

const Status = styled.footer`
  display: flex;
  flex: none;
  gap: 2px;
  height: 21px;
  padding: 1px 0 1px;
  border-top: 1px solid #fff;
`;
const StatusCell = styled.div<{ $w?: number }>`
  display: flex;
  align-items: center;
  ${(p) => (p.$w ? `flex: none; width: ${p.$w}px;` : "flex: 1;")}
  padding-left: 1px;
  white-space: pre;
  border: 1px solid;
  border-color: ${C.edge} #fff #fff ${C.edge};
`;
const StatusHint = styled.span`
  margin-left: 42px;
`;
const FrameEdge = styled.div`
  flex: none;
  height: 6px;
  background: #000;
  border-top: 2px solid #2f6fd8;
`;

export default function App() {
  return (
    <Shell>
      <Global />
      <TitleBar />
      <MenuBar />
      <ToolBar />
      <PageTabs />
      <Workspace>
        <LeftSide />
        <Divider><Splitter dir="right" len={190} /></Divider>
        <RightSide />
      </Workspace>
      <Status>
        <StatusCell $w={150} />
        <StatusCell>
          <span>工程总造价：0  单方造价：0</span>
          <StatusHint>操作提示：在单元格内按空格键进入编辑状态</StatusHint>
        </StatusCell>
      </Status>
      <FrameEdge />
    </Shell>
  );
}
